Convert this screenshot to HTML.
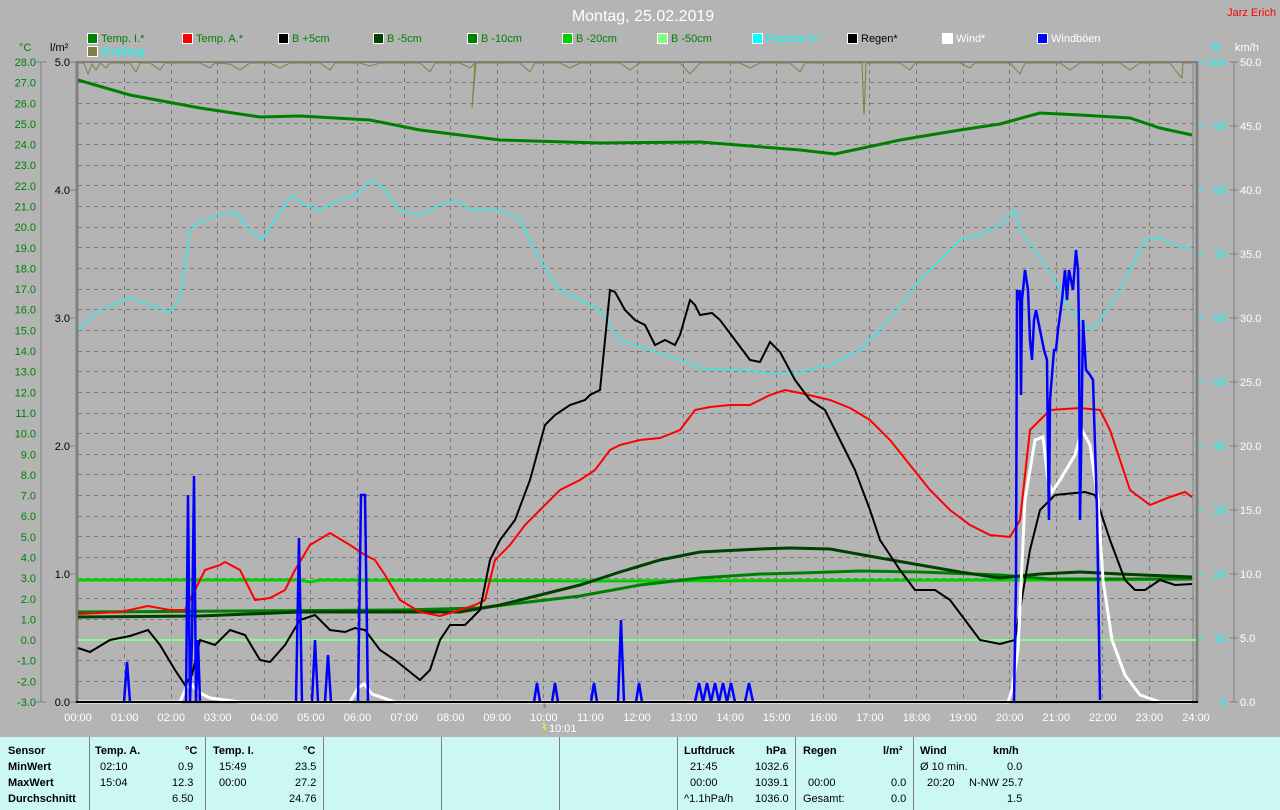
<!DOCTYPE html>
<html><head><meta charset="utf-8"><style>
body{margin:0;width:1280px;height:810px;overflow:hidden;background:#b4b4b4;font-family:"Liberation Sans",sans-serif}
svg{position:absolute;left:0;top:0}
.tbl{position:absolute;left:0;top:737px;width:1280px;height:73px;background:#ccf8f4;font-size:11px;color:#000}
.tbl div{position:absolute;white-space:nowrap}
.b{font-weight:bold}
.sep{position:absolute;top:0;width:1px;height:73px;background:#808080}
</style></head><body>
<svg width="1280" height="810" font-family="Liberation Sans, sans-serif" font-size="11">
<g stroke="#7a7a7a" stroke-dasharray="4,4" stroke-width="1">
<line x1="124.5" y1="62" x2="124.5" y2="702"/><line x1="171.5" y1="62" x2="171.5" y2="702"/><line x1="217.5" y1="62" x2="217.5" y2="702"/><line x1="264.5" y1="62" x2="264.5" y2="702"/><line x1="310.5" y1="62" x2="310.5" y2="702"/><line x1="357.5" y1="62" x2="357.5" y2="702"/><line x1="404.5" y1="62" x2="404.5" y2="702"/><line x1="450.5" y1="62" x2="450.5" y2="702"/><line x1="497.5" y1="62" x2="497.5" y2="702"/><line x1="543.5" y1="62" x2="543.5" y2="702"/><line x1="590.5" y1="62" x2="590.5" y2="702"/><line x1="637.5" y1="62" x2="637.5" y2="702"/><line x1="683.5" y1="62" x2="683.5" y2="702"/><line x1="730.5" y1="62" x2="730.5" y2="702"/><line x1="776.5" y1="62" x2="776.5" y2="702"/><line x1="823.5" y1="62" x2="823.5" y2="702"/><line x1="869.5" y1="62" x2="869.5" y2="702"/><line x1="916.5" y1="62" x2="916.5" y2="702"/><line x1="963.5" y1="62" x2="963.5" y2="702"/><line x1="1009.5" y1="62" x2="1009.5" y2="702"/><line x1="1056.5" y1="62" x2="1056.5" y2="702"/><line x1="1102.5" y1="62" x2="1102.5" y2="702"/><line x1="1149.5" y1="62" x2="1149.5" y2="702"/>
<line x1="78" y1="82.5" x2="1196" y2="82.5"/><line x1="78" y1="103.5" x2="1196" y2="103.5"/><line x1="78" y1="123.5" x2="1196" y2="123.5"/><line x1="78" y1="144.5" x2="1196" y2="144.5"/><line x1="78" y1="165.5" x2="1196" y2="165.5"/><line x1="78" y1="185.5" x2="1196" y2="185.5"/><line x1="78" y1="206.5" x2="1196" y2="206.5"/><line x1="78" y1="227.5" x2="1196" y2="227.5"/><line x1="78" y1="247.5" x2="1196" y2="247.5"/><line x1="78" y1="268.5" x2="1196" y2="268.5"/><line x1="78" y1="289.5" x2="1196" y2="289.5"/><line x1="78" y1="309.5" x2="1196" y2="309.5"/><line x1="78" y1="330.5" x2="1196" y2="330.5"/><line x1="78" y1="351.5" x2="1196" y2="351.5"/><line x1="78" y1="371.5" x2="1196" y2="371.5"/><line x1="78" y1="392.5" x2="1196" y2="392.5"/><line x1="78" y1="413.5" x2="1196" y2="413.5"/><line x1="78" y1="433.5" x2="1196" y2="433.5"/><line x1="78" y1="454.5" x2="1196" y2="454.5"/><line x1="78" y1="474.5" x2="1196" y2="474.5"/><line x1="78" y1="495.5" x2="1196" y2="495.5"/><line x1="78" y1="516.5" x2="1196" y2="516.5"/><line x1="78" y1="536.5" x2="1196" y2="536.5"/><line x1="78" y1="557.5" x2="1196" y2="557.5"/><line x1="78" y1="578.5" x2="1196" y2="578.5"/><line x1="78" y1="598.5" x2="1196" y2="598.5"/><line x1="78" y1="619.5" x2="1196" y2="619.5"/><line x1="78" y1="640.5" x2="1196" y2="640.5"/><line x1="78" y1="660.5" x2="1196" y2="660.5"/><line x1="78" y1="681.5" x2="1196" y2="681.5"/>
</g>
<!-- frame -->
<line x1="77" y1="61" x2="77" y2="703" stroke="#808080" stroke-width="3"/>
<line x1="76" y1="62" x2="1198" y2="62" stroke="#808080" stroke-width="2"/>
<line x1="1197" y1="61" x2="1197" y2="703" stroke="#808080" stroke-width="3"/>
<line x1="1193" y1="62" x2="1193" y2="702" stroke="#808080" stroke-width="1"/>
<line x1="41" y1="62" x2="41" y2="702" stroke="#808080"/>
<line x1="1234" y1="62" x2="1234" y2="702" stroke="#808080"/>
<text x="643" y="21" fill="#fff" font-size="16" text-anchor="middle">Montag, 25.02.2019</text>
<text x="1276" y="16" fill="#f00" font-size="11" text-anchor="end">Jarz Erich</text>
<g font-size="11">
<rect x="87.5" y="33.5" width="10" height="10" fill="#008000" stroke="#fff"/><text x="101" y="42" fill="#008000">Temp. I.*</text>
<rect x="182.5" y="33.5" width="10" height="10" fill="#f00" stroke="#fff"/><text x="196" y="42" fill="#008000">Temp. A.*</text>
<rect x="278.5" y="33.5" width="10" height="10" fill="#000" stroke="#fff"/><text x="292" y="42" fill="#008000">B +5cm</text>
<rect x="373.5" y="33.5" width="10" height="10" fill="#004000" stroke="#fff"/><text x="387" y="42" fill="#008000">B -5cm</text>
<rect x="467.5" y="33.5" width="10" height="10" fill="#008000" stroke="#fff"/><text x="481" y="42" fill="#008000">B -10cm</text>
<rect x="562.5" y="33.5" width="10" height="10" fill="#00d000" stroke="#fff"/><text x="576" y="42" fill="#008000">B -20cm</text>
<rect x="657.5" y="33.5" width="10" height="10" fill="#80ff80" stroke="#fff"/><text x="671" y="42" fill="#008000">B -50cm</text>
<rect x="752.5" y="33.5" width="10" height="10" fill="#0ff" stroke="#fff"/><text x="766" y="42" fill="#0ff">Feuchte A.*</text>
<rect x="847.5" y="33.5" width="10" height="10" fill="#000" stroke="#fff"/><text x="861" y="42" fill="#000">Regen*</text>
<rect x="942.5" y="33.5" width="10" height="10" fill="#fff" stroke="#fff"/><text x="956" y="42" fill="#fff">Wind*</text>
<rect x="1037.5" y="33.5" width="10" height="10" fill="#00f" stroke="#fff"/><text x="1051" y="42" fill="#fff">Windböen</text>
<rect x="87.5" y="46.5" width="10" height="10" fill="#808040" stroke="#fff"/><text x="101" y="55" fill="#0ff">Empfang</text>
</g>
<text x="19" y="51" fill="#008000">°C</text>
<text x="50" y="51" fill="#000">l/m²</text>
<text x="1211" y="51" fill="#0ff">%</text>
<text x="1235" y="51" fill="#fff">km/h</text>
<g fill="#008000" text-anchor="end">
<text x="36" y="66">28.0</text><text x="36" y="86.6">27.0</text><text x="36" y="107.3">26.0</text><text x="36" y="127.9">25.0</text><text x="36" y="148.6">24.0</text><text x="36" y="169.2">23.0</text><text x="36" y="189.9">22.0</text><text x="36" y="210.5">21.0</text><text x="36" y="231.2">20.0</text><text x="36" y="251.8">19.0</text><text x="36" y="272.5">18.0</text><text x="36" y="293.1">17.0</text><text x="36" y="313.7">16.0</text><text x="36" y="334.4">15.0</text><text x="36" y="355">14.0</text><text x="36" y="375.7">13.0</text><text x="36" y="396.3">12.0</text><text x="36" y="417">11.0</text><text x="36" y="437.6">10.0</text><text x="36" y="458.3">9.0</text><text x="36" y="478.9">8.0</text><text x="36" y="499.5">7.0</text><text x="36" y="520.2">6.0</text><text x="36" y="540.8">5.0</text><text x="36" y="561.5">4.0</text><text x="36" y="582.1">3.0</text><text x="36" y="602.8">2.0</text><text x="36" y="623.4">1.0</text><text x="36" y="644">0.0</text><text x="36" y="664.7">-1.0</text><text x="36" y="685.3">-2.0</text><text x="36" y="706">-3.0</text>
</g>
<g stroke="#808080"><line x1="36" y1="62" x2="46" y2="62"/><line x1="36" y1="702" x2="46" y2="702"/>
<line x1="70" y1="62" x2="77" y2="62"/><line x1="70" y1="190" x2="77" y2="190"/><line x1="70" y1="318" x2="77" y2="318"/><line x1="70" y1="446" x2="77" y2="446"/><line x1="70" y1="574" x2="77" y2="574"/><line x1="70" y1="702" x2="77" y2="702"/></g>
<g fill="#000" text-anchor="end">
<text x="70" y="66">5.0</text><text x="70" y="194">4.0</text><text x="70" y="322">3.0</text><text x="70" y="450">2.0</text><text x="70" y="578">1.0</text><text x="70" y="706">0.0</text>
</g>
<g fill="#0ff" text-anchor="end">
<text x="1226" y="66">100</text><text x="1226" y="130">90</text><text x="1226" y="194">80</text><text x="1226" y="258">70</text><text x="1226" y="322">60</text><text x="1226" y="386">50</text><text x="1226" y="450">40</text><text x="1226" y="514">30</text><text x="1226" y="578">20</text><text x="1226" y="642">10</text><text x="1226" y="706">0</text>
</g>
<g stroke="#0ff"><line x1="1198" y1="62" x2="1204" y2="62"/><line x1="1198" y1="126" x2="1204" y2="126"/><line x1="1198" y1="190" x2="1204" y2="190"/><line x1="1198" y1="254" x2="1204" y2="254"/><line x1="1198" y1="318" x2="1204" y2="318"/><line x1="1198" y1="382" x2="1204" y2="382"/><line x1="1198" y1="446" x2="1204" y2="446"/><line x1="1198" y1="510" x2="1204" y2="510"/><line x1="1198" y1="574" x2="1204" y2="574"/><line x1="1198" y1="638" x2="1204" y2="638"/></g>
<g stroke="#808080"><line x1="1230" y1="62" x2="1238" y2="62"/><line x1="1230" y1="126" x2="1238" y2="126"/><line x1="1230" y1="190" x2="1238" y2="190"/><line x1="1230" y1="254" x2="1238" y2="254"/><line x1="1230" y1="318" x2="1238" y2="318"/><line x1="1230" y1="382" x2="1238" y2="382"/><line x1="1230" y1="446" x2="1238" y2="446"/><line x1="1230" y1="510" x2="1238" y2="510"/><line x1="1230" y1="574" x2="1238" y2="574"/><line x1="1230" y1="638" x2="1238" y2="638"/><line x1="1230" y1="702" x2="1238" y2="702"/></g>
<g fill="#fff">
<text x="1240" y="66">50.0</text><text x="1240" y="130">45.0</text><text x="1240" y="194">40.0</text><text x="1240" y="258">35.0</text><text x="1240" y="322">30.0</text><text x="1240" y="386">25.0</text><text x="1240" y="450">20.0</text><text x="1240" y="514">15.0</text><text x="1240" y="578">10.0</text><text x="1240" y="642">5.0</text><text x="1240" y="706">0.0</text>
</g>
<g fill="#fff" text-anchor="middle">
<text x="78" y="721">00:00</text><text x="124.6" y="721">01:00</text><text x="171.2" y="721">02:00</text><text x="217.7" y="721">03:00</text><text x="264.3" y="721">04:00</text><text x="310.9" y="721">05:00</text><text x="357.5" y="721">06:00</text><text x="404.1" y="721">07:00</text><text x="450.7" y="721">08:00</text><text x="497.2" y="721">09:00</text><text x="543.8" y="721">10:00</text><text x="590.4" y="721">11:00</text><text x="637" y="721">12:00</text><text x="683.6" y="721">13:00</text><text x="730.2" y="721">14:00</text><text x="776.7" y="721">15:00</text><text x="823.3" y="721">16:00</text><text x="869.9" y="721">17:00</text><text x="916.5" y="721">18:00</text><text x="963.1" y="721">19:00</text><text x="1009.7" y="721">20:00</text><text x="1056.2" y="721">21:00</text><text x="1102.8" y="721">22:00</text><text x="1149.4" y="721">23:00</text><text x="1196" y="721">24:00</text>
</g>
<line x1="544.5" y1="702" x2="544.5" y2="708" stroke="#808080" stroke-width="2"/>
<path d="M543 722 l3 4 -2 0 3 5 -5 -4 2 0z" fill="#ff0"/>
<text x="549" y="732" fill="#fff">10:01</text>
<polyline fill="none" stroke="#808040" stroke-width="1" points="78,63 84,63 88,74 92,64 96,70 100,63 106,68 110,63 130,63 136,72 140,63 150,63 160,70 165,63 200,63 210,68 215,63 230,64 240,70 250,63 270,63 280,68 290,63 320,63 330,70 335,63 360,63 370,66 380,63 420,63 430,72 435,63 460,63 470,68 475,63 472,108 476,63 520,63 530,72 535,63 560,63 570,68 580,63 620,63 630,70 640,63 680,63 690,74 700,63 740,63 750,68 760,63 790,63 800,72 805,63 850,63 862,63 864,115 866,63 900,63 910,70 915,63 960,63 970,68 975,63 1010,63 1020,74 1025,63 1060,63 1070,70 1080,63 1120,63 1130,70 1140,63 1170,63 1175,70 1182,78 1183,63 1192,63"/>
<line x1="78" y1="640" x2="1196" y2="640" stroke="#80ff80" stroke-width="2"/>
<polyline fill="none" stroke="#00d000" stroke-width="3" points="78,580 300,580 310,582 320,580 600,581 1000,580 1100,580 1192,579"/>
<polyline fill="none" stroke="#008000" stroke-width="3" points="78,612 400,610 480,608 520,603 580,596 640,585 700,578 760,574 800,573 860,571 920,572 1000,575 1050,579 1192,579"/>
<polyline fill="none" stroke="#004000" stroke-width="3" points="78,617 200,616 300,612 400,612 460,612 500,605 540,595 580,585 620,572 660,560 700,552 760,549 790,548 830,549 880,558 920,565 960,572 1000,578 1040,574 1080,572 1120,574 1192,577"/>
<polyline fill="none" stroke="#0ff" stroke-width="1" points="78,330 100,310 130,298 150,305 170,312 180,300 190,230 200,222 220,215 235,212 250,230 262,240 275,220 292,195 305,205 320,210 340,200 355,195 372,180 385,190 400,210 420,215 440,205 455,200 470,210 500,210 520,220 540,260 560,290 580,300 600,310 620,340 650,350 680,360 700,368 740,370 780,374 800,372 830,365 860,350 880,330 900,305 920,280 940,260 960,240 980,235 1000,225 1015,210 1020,230 1035,250 1055,280 1070,310 1090,330 1100,320 1120,290 1145,240 1160,238 1180,247 1192,248"/>
<polyline fill="none" stroke="#008000" stroke-width="3" points="78,80 130,95 200,108 260,117 300,116 370,120 420,130 500,140 600,143 700,142 800,150 835,154 900,140 960,130 1000,124 1040,113 1080,115 1130,118 1160,128 1192,135"/>
<polyline fill="none" stroke="#f00" stroke-width="2" points="78,614 100,613 120,612 148,606 170,610 185,610 195,590 205,570 220,565 225,562 240,570 255,600 270,598 285,590 295,570 310,545 330,533 350,545 365,555 375,560 385,575 400,600 420,612 440,616 460,610 475,605 485,600 495,560 510,545 525,525 540,510 560,490 580,480 595,470 610,450 620,445 640,440 660,438 680,430 695,410 710,407 730,405 750,405 770,395 785,390 800,393 830,400 850,408 870,420 890,440 910,465 930,490 950,510 970,525 990,535 1010,537 1020,520 1030,430 1050,410 1080,408 1100,410 1110,430 1130,490 1150,505 1170,497 1185,492 1192,497"/>
<polyline fill="none" stroke="#000" stroke-width="2" points="78,648 90,652 110,640 130,636 148,630 160,645 175,670 185,685 192,675 200,640 215,645 230,630 245,635 260,660 270,662 285,645 300,620 315,615 330,630 345,632 355,628 365,630 380,650 395,660 410,672 420,680 430,670 440,640 450,625 465,625 480,610 490,560 500,540 515,520 530,480 545,425 555,415 570,405 585,400 590,395 600,390 610,290 615,292 625,310 635,320 645,325 655,345 665,340 675,345 680,335 690,300 695,305 700,315 712,313 720,320 735,340 750,360 760,362 770,342 780,352 795,380 810,400 825,410 840,440 855,470 870,510 880,540 900,570 915,590 935,590 950,600 965,620 980,640 1000,644 1015,640 1030,550 1040,510 1055,495 1085,492 1095,495 1110,540 1125,580 1135,590 1145,590 1160,580 1175,585 1192,584"/>
<polyline fill="none" stroke="#fff" stroke-width="3" points="78,702 180,702 186,688 192,685 198,692 210,698 240,702 350,702 358,688 364,684 372,694 395,702 1008,702 1012,690 1018,650 1025,500 1035,440 1043,437 1048,480 1052,492 1060,480 1075,455 1082,430 1090,445 1098,500 1103,580 1112,640 1125,675 1140,695 1160,702 1192,702"/>
<g fill="none" stroke="#00f" stroke-width="2.5">
<polyline points="124,702 127,662 130,702"/>
<polyline points="186,702 188,495 190,702 192,640 194,476 196,702 198,640 200,702"/>
<polyline points="296,702 299,538 302,702"/>
<polyline points="312,702 315,640 318,702"/>
<polyline points="325,702 328,655 331,702"/>
<polyline points="358,702 361,495 365,495 368,702"/>
<polyline points="534,702 537,683 540,702"/>
<polyline points="552,702 555,683 558,702"/>
<polyline points="591,702 594,683 597,702"/>
<polyline points="618,702 621,620 624,702"/>
<polyline points="636,702 639,683 642,702"/>
<polyline points="695,702 699,683 703,702 707,683 711,702 715,683 719,702 723,683 727,702 731,683 735,702"/>
<polyline points="745,702 749,683 753,702"/>
<polyline points="1014,702 1016,580 1017,290 1019,300 1020,290 1021,395 1022,300 1025,270 1028,290 1030,340 1032,360 1034,320 1036,310 1040,330 1044,350 1047,360 1048,460 1049,520 1050,400 1054,350 1056,350 1058,330 1062,300 1065,270 1067,300 1069,270 1073,290 1076,250 1078,270 1079,330 1080,520 1081,460 1083,320 1086,370 1090,375 1093,380 1095,445 1097,510 1100,700"/>
</g>
<line x1="76" y1="702" x2="1198" y2="702" stroke="#000" stroke-width="2"/>
</svg>
<div class="tbl">
<div class="sep" style="left:89px"></div><div class="sep" style="left:205px"></div><div class="sep" style="left:323px"></div><div class="sep" style="left:441px"></div><div class="sep" style="left:559px"></div><div class="sep" style="left:677px"></div><div class="sep" style="left:795px"></div><div class="sep" style="left:913px"></div>
<div class="b" style="left:8px;top:8px">Sensor</div>
<div class="b" style="left:8px;top:24px">MinWert</div>
<div class="b" style="left:8px;top:40px">MaxWert</div>
<div class="b" style="left:8px;top:56px">Durchschnitt</div>
<div class="b" style="left:95px;top:8px">Temp. A.</div><div class="b" style="left:185px;top:8px">°C</div>
<div style="left:100px;top:24px">02:10</div><div style="left:178px;top:24px">0.9</div>
<div style="left:100px;top:40px">15:04</div><div style="left:172px;top:40px">12.3</div>
<div style="left:172px;top:56px">6.50</div>
<div class="b" style="left:213px;top:8px">Temp. I.</div><div class="b" style="left:303px;top:8px">°C</div>
<div style="left:219px;top:24px">15:49</div><div style="left:295px;top:24px">23.5</div>
<div style="left:219px;top:40px">00:00</div><div style="left:295px;top:40px">27.2</div>
<div style="left:289px;top:56px">24.76</div>
<div class="b" style="left:684px;top:8px">Luftdruck</div><div class="b" style="left:766px;top:8px">hPa</div>
<div style="left:690px;top:24px">21:45</div><div style="left:755px;top:24px">1032.6</div>
<div style="left:690px;top:40px">00:00</div><div style="left:755px;top:40px">1039.1</div>
<div style="left:684px;top:56px">^1.1hPa/h</div><div style="left:755px;top:56px">1036.0</div>
<div class="b" style="left:803px;top:8px">Regen</div><div class="b" style="left:883px;top:8px">l/m²</div>
<div style="left:808px;top:40px">00:00</div><div style="left:891px;top:40px">0.0</div>
<div style="left:803px;top:56px">Gesamt:</div><div style="left:891px;top:56px">0.0</div>
<div class="b" style="left:920px;top:8px">Wind</div><div class="b" style="left:993px;top:8px">km/h</div>
<div style="left:920px;top:24px">Ø 10 min.</div><div style="left:1007px;top:24px">0.0</div>
<div style="left:927px;top:40px">20:20</div><div style="left:969px;top:40px">N-NW 25.7</div>
<div style="left:1007px;top:56px">1.5</div>
</div>
</body></html>
